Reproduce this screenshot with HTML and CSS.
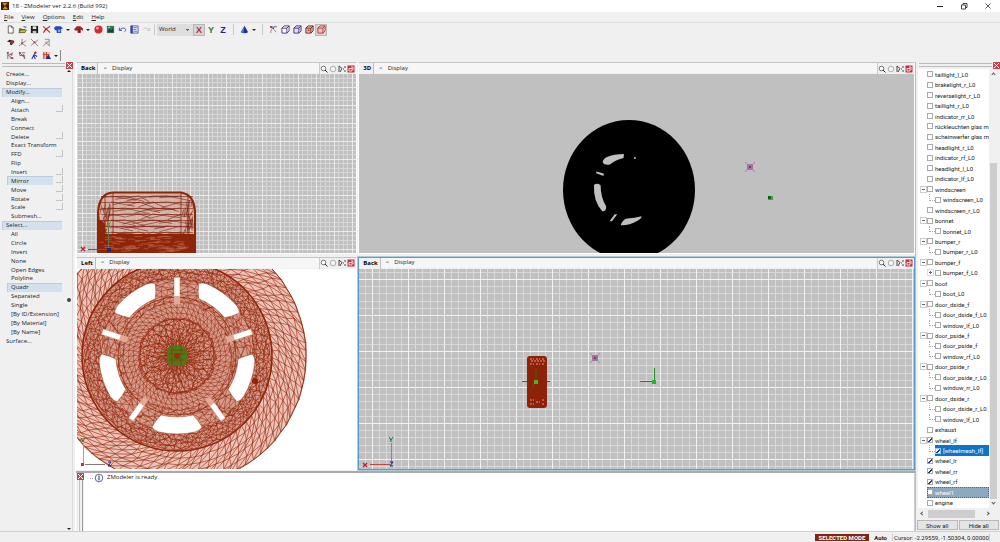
FILE: index.html
```
<!DOCTYPE html>
<html lang="en">
	<head>
		<meta charset="UTF-8" />
		<meta name="viewport" content="width=device-width, initial-scale=1.0" />
		<title>18 - ZModeler ver 2.2.6 (Build 992)</title>
		<link rel="stylesheet" href="styles.css">
		<script src="script.js" defer></script>
	</head>
	<body>
		<div class="titlebar">
			<svg class="logo" viewBox="0 0 10 10"><rect width="10" height="10" fill="#3a1a08"/><path d="M1 1h7L5 5l4 4H2l3-4z" fill="#e08a20"/><path d="M6 1h3v3z" fill="#8b2a10"/></svg>
			<span class="name">18 - ZModeler ver 2.2.6 (Build 992)</span>
			<button aria-label="Minimize"><svg viewBox="0 0 8 8"><path d="M1 4.5h6" stroke="#222" fill="none"/></svg></button>
			<button aria-label="Restore"><svg viewBox="0 0 8 8"><path d="M1.5 3h4v4h-4zM3 3V1.5h4v4H5.500" stroke="#333" stroke-width=".9" fill="none"/></svg></button>
			<button aria-label="Close"><svg viewBox="0 0 8 8"><path d="M1.500 1.500l5 5M6.500 1.500l-5 5" stroke="#333" stroke-width=".8" fill="none"/></svg></button>
		</div>
		<div class="menubar">
			<button><u>F</u>ile</button>
			<button><u>V</u>iew</button>
			<button><u>O</u>ptions</button>
			<button><u>E</u>dit</button>
			<button><u>H</u>elp</button>
		</div>
		<div class="toolbars">
			<div class="toolbar">
				<button class="tool" aria-label="New"><svg viewBox="0 0 10 10"><path d="M2.500 1h3.500l2 2v6h-5.500z" fill="#fff" stroke="#333" stroke-width=".8"/><path d="M6 1v2h2" fill="none" stroke="#333" stroke-width=".7"/></svg></button>
				<button class="tool" aria-label="Open"><svg viewBox="0 0 10 10"><path d="M1 8.500V3.500h3l.7 1H8v4z" fill="#7a7a20"/><path d="M1 8.500l2-3h6.500l-2 3z" fill="#c9c440" stroke="#333" stroke-width=".6"/><path d="M5.500 2.500c1-1.500 2-1 3 .2M8.700 1.400v1.500H7.200" fill="none" stroke="#222" stroke-width=".6"/></svg></button>
				<button class="tool" aria-label="Save"><svg viewBox="0 0 10 10"><path d="M1 1h8v8H1z" fill="#182018"/><path d="M3 1.500h4v3H3z" fill="#e8e8e8"/><path d="M3 6.500h4V9H3z" fill="#c8c8c8"/></svg></button>
				<button class="tool" aria-label="Delete"><svg viewBox="0 0 10 10"><path d="M1 1.500c3 2 5.500 4.500 8 7M9 1.500c-3 1.500-6 4-7.500 7" fill="none" stroke="#c8202a" stroke-width="1.200"/></svg></button>
				<button class="tool" aria-label="Import"><svg viewBox="0 0 10 10"><path d="M0 3l2-1.500h5.500L10 4 8.500 4.500 8 3.500V9H3V6L1 5.500z" fill="#2748b8"/><path d="M4.500 5h2.500v3H4.500z" fill="#8ea8ee"/></svg></button>
				<button class="drop" aria-label="Import options"></button>
				<button class="tool" aria-label="Export"><svg viewBox="0 0 10 10"><path d="M0 5l3-3.500h4L10 4v2.500L7.500 5v4H4V6L2 6.500z" fill="#a82420"/><path d="M5 5h2v3H5z" fill="#333"/></svg></button>
				<button class="drop" aria-label="Export options"></button>
				<button class="tool" aria-label="Materials"><svg viewBox="0 0 10 10"><circle cx="5" cy="5" r="4.500" fill="#d02c34"/><circle cx="3.800" cy="3.500" r="1.500" fill="#f3a0a0"/></svg></button>
				<button class="tool" aria-label="Textures"><svg viewBox="0 0 10 10"><path d="M1 1h8v8H1z" fill="#377a48"/><path d="M2 7l2-3 2 2 2-3v5H2z" fill="#1c3a5a"/><path d="M2.500 2h2v1.500h-2z" fill="#b8dca0"/></svg></button>
				<button class="tool" aria-label="Undo"><svg viewBox="0 0 10 10"><path d="M1.500 3v3h3M1.700 5.800c2-3 6-3 6.800-.8.300 1.500-.5 2-1.500 2.500" fill="none" stroke="#3a4a98"/></svg></button>
				<button class="tool" aria-label="History"><svg viewBox="0 0 10 10"><path d="M1 1h8v8H1z" fill="#e8ecff" stroke="#2c3c98" stroke-width=".8"/><path d="M1 1h2v8H1zM4 3h4M4 5h3M4 7h4" fill="#2c3c98" stroke="#4a58b0" stroke-width=".8"/></svg></button>
				<button class="tool" aria-label="Redo" disabled><svg viewBox="0 0 10 10"><path d="M8.500 3v3h-3M8.300 5.800c-2-3-6-3-6.800-.8" fill="none" stroke="#c4c4c4"/></svg></button>
				<span class="sep"></span>
				<select class="space" aria-label="Coordinate space"><option>World</option><option>Local</option></select>
				<button class="tool axis on x">X</button>
				<button class="tool axis y">Y</button>
				<button class="tool axis z">Z</button>
				<span class="sep wide"></span>
				<button class="tool" aria-label="Primitives"><svg viewBox="0 0 10 10"><path d="M5 .8L9 8q-4 2.200-8 0z" fill="#1c2c9c"/><path d="M5 .8L4 9q-2-.2-3-1z" fill="#4a78d8"/></svg></button>
				<button class="drop" aria-label="More primitives"></button>
				<span class="sep wide"></span>
				<button class="tool" aria-label="Vertices level"><svg viewBox="0 0 10 10"><path d="M2 9C2 5 3 3 8 1.500M2 2h7M3 2l5 6" fill="none" stroke="#56508c" stroke-width=".7"/><path d="M1.200 1.200h2v2h-2zM4 3h1.500v1.500H4z" fill="#b8303c"/></svg></button>
				<button class="tool" aria-label="Edges level"><svg viewBox="0 0 10 10"><path d="M1 3.500h5.500V9H1zL3.500 1H9v5.500L6.500 9M6.500 3.500L9 1" fill="#fff" stroke="#44306c"/></svg></button>
				<button class="tool" aria-label="Faces level"><svg viewBox="0 0 10 10"><path d="M1 3.500h5.500V9H1zL3.500 1H9v5.500L6.500 9M6.500 3.500L9 1" fill="#e4e0f4" stroke="#44306c"/></svg></button>
				<button class="tool" aria-label="Solids level"><svg viewBox="0 0 10 10"><path d="M1 3.500h5.500V9H1zL3.500 1H9v5.500L6.500 9M6.500 3.500L9 1" fill="#f0c8b8" stroke="#5a2020"/><path d="M3 5h2v2H3z" fill="#c03020"/></svg></button>
				<button class="tool on" aria-label="Objects level"><svg viewBox="0 0 10 10"><path d="M1 3.500h5.500V9H1zL3.500 1H9v5.500L6.500 9M6.500 3.500L9 1" fill="#f4c8c8" stroke="#b83038"/></svg></button>
			</div>
			<div class="toolbar">
				<button class="tool" aria-label="Magnet"><svg viewBox="0 0 10 10"><path d="M1 4l3-2 5 1v2L6 8 4 7l1-2z" fill="#3c2424"/><path d="M5 4l3-1v2L6 7z" fill="#b03828"/></svg></button>
				<button class="tool" aria-label="Snap to vertex"><svg viewBox="0 0 10 10"><path d="M4.500 1v5l-3.500 3M4.500 6l4.500 3M4.500 6L9 3" fill="none" stroke="#555" stroke-width=".7"/><path d="M3.500 5h2v2h-2z" fill="#d03048"/></svg></button>
				<button class="tool" aria-label="Snap to edge"><svg viewBox="0 0 10 10"><path d="M1 1l8 8M9 2L1 8.500" fill="none" stroke="#555" stroke-width=".7"/><path d="M4 4l2 1.500" stroke="#d03048" stroke-width="1.500"/></svg></button>
				<button class="tool" aria-label="Snap to face"><svg viewBox="0 0 10 10"><path d="M3 1.500h5v7M8 3L1 9M3.500 5L9 9" fill="none" stroke="#666" stroke-width=".7"/><path d="M4 4h2v2H4z" fill="#c89098"/></svg></button>
			</div>
			<div class="toolbar">
				<button class="tool" aria-label="Move pivot"><svg viewBox="0 0 10 10"><path d="M2 1v8M2 5l6-3M3 5l5 4M4 8h4" fill="none" stroke="#50486c" stroke-width=".8"/><path d="M1 1h2v2H1zM5 3h2v2H5zM6 7h2v2H6z" fill="#c03838"/></svg></button>
				<button class="tool" aria-label="Copy pivot"><svg viewBox="0 0 10 10"><path d="M2 2v3h5v4M4 2h4M2 2l6 6" fill="none" stroke="#50486c" stroke-width=".8"/><path d="M1 1h2v2H1zM5 4h2v2H5z" fill="#c03838"/></svg></button>
				<button class="tool" aria-label="Bones"><svg viewBox="0 0 10 10"><path d="M6 2L4 5l2 4M4 5L2 9M4 4l4 2" fill="none" stroke="#2834a0" stroke-width="1.200"/><circle cx="6" cy="1.800" r="1.300" fill="#b02c34"/></svg></button>
				<button class="tool" aria-label="UV mapper"><svg viewBox="0 0 10 10"><path d="M1 1h8v8H1z" fill="#f0c0a8"/><path d="M2 1v8M5 1v8M1 4h7" stroke="#b82c20" stroke-width=".9"/><path d="M4 9l3-5 3 5z" fill="#1c2c6c"/></svg></button>
				<button class="drop" aria-label="More tools"></button>
				<span class="sep dark"></span>
			</div>
		</div>
		<div class="main">
			<div class="commands">
				<div class="grip"><i></i><button class="close" aria-label="Close panel"></button></div>
				<ul class="list">
					<li><button>Create...</button></li>
					<li><button>Display...</button></li>
					<li><button class="active">Modify...</button></li>
					<li class="sub"><button>Align...</button></li>
					<li class="sub"><button>Attach</button><button class="opt" aria-label="Attach options"></button></li>
					<li class="sub"><button>Break</button></li>
					<li class="sub"><button>Connect</button></li>
					<li class="sub"><button>Delete</button><button class="opt" aria-label="Delete options"></button></li>
					<li class="sub"><button>Exact Transform</button></li>
					<li class="sub"><button>FFD</button><button class="opt" aria-label="FFD options"></button></li>
					<li class="sub"><button>Flip</button></li>
					<li class="sub"><button>Insert</button><button class="opt" aria-label="Insert options"></button></li>
					<li class="sub"><button class="active">Mirror</button><button class="opt" aria-label="Mirror options"></button></li>
					<li class="sub"><button>Move</button><button class="opt" aria-label="Move options"></button></li>
					<li class="sub"><button>Rotate</button><button class="opt" aria-label="Rotate options"></button></li>
					<li class="sub"><button>Scale</button><button class="opt" aria-label="Scale options"></button></li>
					<li class="sub"><button>Submesh...</button></li>
					<li><button class="active">Select...</button></li>
					<li class="sub"><button>All</button></li>
					<li class="sub"><button>Circle</button></li>
					<li class="sub"><button>Invert</button></li>
					<li class="sub"><button>None</button></li>
					<li class="sub"><button>Open Edges</button></li>
					<li class="sub"><button>Polyline</button></li>
					<li class="sub"><button class="active">Quadr</button></li>
					<li class="sub"><button>Separated</button></li>
					<li class="sub"><button>Single</button></li>
					<li class="sub"><button>[By ID/Extension]</button></li>
					<li class="sub"><button>[By Material]</button></li>
					<li class="sub"><button>[By Name]</button></li>
					<li><button>Surface...</button></li>
				</ul>
				<div class="rail"><i class="up"></i><i class="knob"></i><i class="down"></i></div>
			</div>
			<div class="center">
				<div class="views">
					<div class="view">
						<div class="head"><b>Back</b><button class="display"><span>&lt;</span>Display</button><span class="icons"></span></div>
						<svg class="canvas" id="back"></svg>
					</div>
					<div class="view">
						<div class="head"><b>3D</b><button class="display"><span>&lt;</span>Display</button><span class="icons"></span></div>
						<svg class="canvas">
							<ellipse cx="270" cy="116" rx="66" ry="70"/>
							<g transform="translate(181 36) scale(.333)" fill="#c0c0c0">
								<path d="M188 157Q190 134 252 132L251 144Q230 148 211 163Q194 168 188 157z"/>
								<path d="M169 185l22 6v7l-22-8z"/>
								<path d="M162 225Q172 218 182 226Q182 262 199 290Q198 306 187 304Q160 275 162 225z"/>
								<path d="M224 313h8l-16 21h-7z"/>
								<path d="M243 343Q250 328 262 326Q285 325 305 319Q305 327 290 334Q268 347 243 346z"/>
								<circle cx="285" cy="144" r="3"/>
							</g>
							<use href="#light" x="391" y="93"/>
							<path d="M409 122h5v4h-5z" fill="#2eb03a"/><path d="M409 122h3v3h-3z" fill="#106018"/>
						</svg>
					</div>
					<div class="view">
						<div class="head"><b>Left</b><button class="display"><span>&lt;</span>Display</button><span class="icons"></span></div>
						<svg class="canvas white" id="left"></svg>
					</div>
					<div class="view current">
						<div class="head"><b>Back</b><button class="display"><span>&lt;</span>Display</button><span class="icons"></span></div>
						<svg class="canvas">
							<defs>
								<pattern id="grid" width="36" height="36" patternUnits="userSpaceOnUse" x="13" y="10">
									<path d="M7.500 0v36M14.500 0v36M22.500 0v36M29.500 0v36M0 7.500h36M0 14.500h36M0 22.500h36M0 29.500h36" stroke="#d8d8d8" fill="none"/>
									<path d="M.5 0v36M0 .5h36" stroke="#f2f2f2" fill="none"/>
								</pattern>
								<g id="light"><path d="M-5-5L5 5M5-5L-5 5" stroke="#b07ca4"/><path d="M-3-3h6v6h-6z" fill="#a8709c"/><path d="M-1-1h2v2h-2z" fill="#7a3c70"/></g>
							</defs>
							<rect width="100%" height="100%" fill="url(#grid)"/>
							<path d="M163 112.500h28" stroke="#a03020"/>
							<rect x="168" y="87" width="20" height="52" rx="3" fill="#8e2208"/>
							<path d="M171 90h4M171 95h4M177 90h4M177 95h4M183 90h3M183 95h3M171 131h4M171 135h4M177 133h4M183 131h3M183 135h3M172 92h14" stroke="#dca08c" stroke-dasharray="2 1"/>
							<path d="M177 113V99M175 114l-1 4" stroke="#3c6010"/><path d="M175 111h4v4h-4z" fill="#40b828"/>
							<use href="#light" x="236" y="89"/>
							<path d="M281 112.500h14" stroke="#b83038"/><path d="M295.500 113V99" stroke="#188828"/><path d="M293 111h4v4h-4z" fill="#20b828"/>
							<path d="M11 195.500h20" stroke="#c04840"/><path d="M32.500 174v21" stroke="#60a860"/>
							<path d="M30 168l2 3 2-3M32 171v2" stroke="#107828" fill="none"/><path d="M4 194l4 4M8 194l-4 4" stroke="#d01830" stroke-width="1.300"/><path d="M31 193h3l-3 4h3" stroke="#20207a" fill="none"/>
						</svg>
					</div>
				</div>
				<div class="console">
					<div class="side"><button class="close" aria-label="Close log"></button></div>
					<div class="log"><svg viewBox="0 0 14 10"><path d="M0 5.500h4" stroke="#999" stroke-dasharray="1 1"/><circle cx="9" cy="5" r="3.800" fill="#fff" stroke="#34407c" stroke-width=".8"/><path d="M9 2.500v5" stroke="#1c2c7c"/></svg><span>ZModeler is ready.</span></div>
				</div>
			</div>
			<div class="objects">
				<div class="grip"><i></i><button class="close" aria-label="Close panel"></button></div>
				<div class="scroller">
					<ul class="tree">
						<li><label><input type="checkbox">taillight_l_L0</label></li>
						<li><label><input type="checkbox">brakelight_r_L0</label></li>
						<li><label><input type="checkbox">reverselight_r_L0</label></li>
						<li><label><input type="checkbox">taillight_r_L0</label></li>
						<li><label><input type="checkbox">indicator_rr_L0</label></li>
						<li><label><input type="checkbox">rückleuchten glas m</label></li>
						<li><label><input type="checkbox">scheinwerfer glas m</label></li>
						<li><label><input type="checkbox">headlight_r_L0</label></li>
						<li><label><input type="checkbox">indicator_rf_L0</label></li>
						<li><label><input type="checkbox">headlight_l_L0</label></li>
						<li><label><input type="checkbox">indicator_lf_L0</label></li>
						<li class="open"><label><input type="checkbox">windscreen</label></li>
						<li class="child last"><label><input type="checkbox">windscreen_L0</label></li>
						<li><label><input type="checkbox">windscreen_r_L0</label></li>
						<li class="open"><label><input type="checkbox">bonnet</label></li>
						<li class="child last"><label><input type="checkbox">bonnet_L0</label></li>
						<li class="open"><label><input type="checkbox">bumper_r</label></li>
						<li class="child last"><label><input type="checkbox">bumper_r_L0</label></li>
						<li class="open"><label><input type="checkbox">bumper_f</label></li>
						<li class="child closed"><label><input type="checkbox">bumper_f_L0</label></li>
						<li class="open"><label><input type="checkbox">boot</label></li>
						<li class="child last"><label><input type="checkbox">boot_L0</label></li>
						<li class="open"><label><input type="checkbox">door_dside_f</label></li>
						<li class="child"><label><input type="checkbox">door_dside_f_L0</label></li>
						<li class="child last"><label><input type="checkbox">window_lf_L0</label></li>
						<li class="open"><label><input type="checkbox">door_pside_f</label></li>
						<li class="child"><label><input type="checkbox">door_pside_f</label></li>
						<li class="child last"><label><input type="checkbox">window_rf_L0</label></li>
						<li class="open"><label><input type="checkbox">door_pside_r</label></li>
						<li class="child"><label><input type="checkbox">door_pside_r_L0</label></li>
						<li class="child last"><label><input type="checkbox">window_rr_L0</label></li>
						<li class="open"><label><input type="checkbox">door_dside_r</label></li>
						<li class="child"><label><input type="checkbox">door_dside_r_L0</label></li>
						<li class="child last"><label><input type="checkbox">window_lf_L0</label></li>
						<li><label><input type="checkbox">exhaust</label></li>
						<li class="open"><label><input type="checkbox" checked>wheel_lf</label></li>
						<li class="child last selected"><label><input type="checkbox" checked>[wheelmesh_lf]</label></li>
						<li><label><input type="checkbox" checked>wheel_lr</label></li>
						<li><label><input type="checkbox" checked>wheel_rr</label></li>
						<li><label><input type="checkbox" checked>wheel_rf</label></li>
						<li class="target"><label><input type="checkbox">wheel1</label></li>
						<li><label><input type="checkbox">engine</label></li>
					</ul>
					<div class="vbar"><i class="arrow up"></i><i class="thumb"></i><i class="arrow down"></i></div>
				</div>
				<div class="hbar"><i class="arrow prev"></i><i class="thumb"></i><i class="arrow next"></i></div>
				<div class="actions"><button>Show all</button><button>Hide all</button></div>
			</div>
		</div>
		<div class="status">
			<b class="mode">SELECTED MODE</b>
			<b>Auto</b>
			<span class="cursor">Cursor: -2.29559, -1.50304, 0.00000</span>
		</div>
	</body>
</html>
```
FILE: styles.css
```
* {
	box-sizing: border-box;
}
body {
	margin: 0;
	height: 100vh;
	display: flex;
	flex-direction: column;
	overflow: hidden;
	background: #f0f0f0;
	color: #222;
	font: 6px/9px "Open Sans", "Noto Sans", sans-serif;
}
button,
select {
	margin: 0;
	padding: 0;
	border: 0;
	background: none;
	color: inherit;
	font: inherit;
}
ul {
	margin: 0;
	padding: 0;
	list-style: none;
}
svg {
	display: block;
}

.titlebar {
	display: flex;
	align-items: center;
	height: 12px;
	flex: none;
	background: #fff;
}
.titlebar .logo {
	width: 8px;
	height: 8px;
	margin: 0 3px 0 1px;
}
.titlebar .name {
	flex: 1;
}
.titlebar button {
	width: 24px;
	display: flex;
	justify-content: center;
}
.titlebar button svg {
	width: 8px;
	height: 8px;
}
.menubar {
	display: flex;
	gap: 8px;
	flex: none;
	height: 11px;
	padding-left: 4px;
	border-bottom: 1px solid #dcdcdc;
}
.toolbars {
	flex: none;
}
.toolbar {
	display: flex;
	align-items: center;
	height: 13px;
	padding-left: 4px;
}
.tool {
	display: flex;
	align-items: center;
	justify-content: center;
	width: 12px;
	height: 12px;
}
.tool svg {
	width: 9px;
	height: 9px;
}
.tool.on {
	background: #d4d4d4;
	border: 1px solid #b8b8b8;
}
.axis {
	font: bold 9px/12px "Liberation Sans", Arial, sans-serif;
}
.axis.x {
	color: #b8283c;
}
.axis.y {
	color: #1c7830;
}
.axis.z {
	color: #1c2878;
}
.drop {
	width: 8px;
	height: 12px;
	display: flex;
	align-items: center;
	justify-content: center;
}
.drop::after {
	content: "";
	border: 2px solid transparent;
	border-top-color: #222;
	border-bottom: 0;
}
.sep {
	width: 1px;
	height: 11px;
	margin: 0 2px;
	background: #c8c8c8;
}
.sep.wide {
	margin: 0 4px;
}
.sep.dark {
	margin: 0;
	background: #888;
}
.space {
	width: 36px;
	height: 12px;
	padding-left: 2px;
	appearance: none;
	border-radius: 0;
	font-size: 6px;
	background: linear-gradient(45deg, transparent 50%, #666 50%) 29px 5px / 2px 2px no-repeat,
		linear-gradient(-45deg, transparent 50%, #666 50%) 31px 5px / 2px 2px no-repeat, #dedede;
}

.main {
	flex: 1;
	min-height: 0;
	display: flex;
}
.grip {
	grid-column: 1 / -1;
	display: flex;
	justify-content: space-between;
	height: 7px;
	flex: none;
}
.grip i {
	flex: 1;
	height: 4px;
	margin: 1px 1px 0 2px;
	border: 1px solid #bbb;
	border-width: 1px 0;
}
.close {
	width: 7px;
	height: 7px;
	flex: none;
	background: linear-gradient(45deg, transparent 42%, #fff 42%, #fff 58%, transparent 58%),
		linear-gradient(-45deg, transparent 42%, #fff 42%, #fff 58%, transparent 58%), #c8434c;
	border: 1px solid #c8434c;
}

/* command list */
.commands {
	width: 76px;
	flex: none;
	display: grid;
	grid-template-columns: 1fr 7px;
	grid-template-rows: 7px 1fr;
	padding-right: 2px;
	border-right: 1px solid #fff;
}
.list {
	display: grid;
	grid-auto-rows: 1fr;
	height: 275px;
	margin: 1px 1px 0 2px;
	line-height: 8px;
}
.list li {
	display: flex;
	gap: 3px;
	padding-right: 3px;
}
.list .sub {
	padding-left: 5px;
}
.list button {
	flex: 1;
	padding-left: 4px;
	text-align: left;
	white-space: nowrap;
}
.list .active {
	background: #d3e1ef;
	box-shadow: inset 1px 1px #bccbda;
}
.list .opt {
	flex: 0 0 7px;
	height: 7px;
	padding: 0;
	margin-right: -1px;
	border: 1px solid #c4c4c4;
	border-width: 0 1px 1px 0;
}
.rail {
	display: flex;
	flex-direction: column;
	align-items: center;
	justify-content: space-between;
	border-right: 1px solid #dcdcdc;
	padding: 1px 0;
}
.rail i {
	border: 2px solid transparent;
}
.rail .up {
	border-bottom-color: #222;
	border-top: 0;
}
.rail .knob {
	border-color: #444;
	border-radius: 2px;
}
.rail .down {
	border-top-color: #222;
	border-bottom: 0;
}

/* viewports */
.center {
	flex: 1;
	min-width: 0;
	display: flex;
	flex-direction: column;
}
.views {
	flex: 1;
	min-height: 0;
	display: grid;
	grid-template-columns: 281fr 556fr;
	grid-template-rows: 192fr 214fr;
	gap: 3px 1px;
}
.view {
	display: flex;
	flex-direction: column;
	min-width: 0;
	min-height: 0;
	border: 1px solid #fff;
	border-top-color: #c4c4c4;
}
.view.current {
	border-color: #5a9cc8;
	box-shadow: 0 0 0 1px #a8cce0;
}
.head {
	flex: none;
	display: flex;
	height: 11px;
}
.head b {
	padding: 1px 2px 0 4px;
	border-right: 1px solid #c0c0c0;
	color: #000;
}
.head .display {
	flex: 1;
	margin: 0 0 1px;
	padding-left: 5px;
	text-align: left;
	background: #f6f6f6;
}
.head .display span {
	margin-right: 5px;
}
.icons {
	display: flex;
	align-items: center;
	border-left: 1px solid #ccc;
}
.icons button {
	width: 9px;
}
.icons svg {
	width: 8px;
	height: 8px;
}
.canvas {
	flex: 1;
	width: 100%;
	min-height: 0;
	background: #c0c0c0;
}
.canvas.white {
	background: #fff;
}

.console {
	flex: none;
	display: flex;
	height: 60px;
	padding-left: 1px;
	margin-top: 1px;
	border-top: 2px solid #aaa;
}
.console .side {
	width: 7px;
	background: linear-gradient(90deg, transparent 2px, #c4c4c4 2px, #c4c4c4 3px, transparent 3px, transparent 5px, #999 5px, #999 6px, transparent 6px);
}
.console .side button {
	display: block;
}
.log {
	flex: 1;
	display: flex;
	align-items: flex-start;
	padding-left: 6px;
	background: #fff;
	border-right: 1px solid #ccc;
}
.log svg {
	width: 14px;
	height: 10px;
	margin-right: 3px;
}

/* object tree */
.objects {
	width: 85px;
	flex: none;
	display: flex;
	flex-direction: column;
	padding-left: 1px;
	border-left: 1px solid #bbb;
	font-family: Roboto, sans-serif;
}
.scroller {
	flex: 1;
	min-height: 0;
	display: flex;
	margin: 0 2px 0 1px;
	background: #fff;
}
.tree {
	flex: 1;
	min-width: 0;
	display: grid;
	grid-auto-rows: 1fr;
	overflow: hidden;
}
.tree li {
	display: flex;
	align-items: center;
	padding-left: 9px;
	position: relative;
	white-space: nowrap;
}
.tree .child {
	padding-left: 17px;
}
.tree label {
	flex: 1;
	display: flex;
	align-items: center;
	gap: 2px;
}
.tree input {
	appearance: none;
	width: 6px;
	height: 6px;
	margin: 0;
	flex: none;
	border: 1px solid #aaa;
	background: #fff;
}
.tree input:checked {
	background: linear-gradient(-45deg, transparent 35%, #1c3c98 35%, #1c3c98 60%, transparent 60%) #fff;
}
.tree .open::before,
.tree .closed::before {
	content: "";
	position: absolute;
	left: 2px;
	width: 5px;
	height: 5px;
	border: 1px solid #ccc;
	background: linear-gradient(#666, #666) center / 3px 1px no-repeat;
}
.tree .closed::before {
	left: 9px;
	border-color: #ddd;
	background: linear-gradient(#666, #666) center / 3px 1px no-repeat, linear-gradient(#666, #666) center / 1px 3px no-repeat;
}
.tree .child:not(.closed)::before {
	content: "";
	position: absolute;
	left: 11px;
	top: 0;
	width: 5px;
	height: 50%;
	border: 1px dotted #aaa;
	border-width: 0 0 1px 1px;
}
.tree .selected label {
	align-self: stretch;
	background: #0f74c6;
	color: #fff;
}
.tree .selected input {
	border-color: #9cc8ec;
}
.tree .target label {
	align-self: stretch;
	background: #8ca9c0;
	color: #fff;
	outline: 1px dotted #567;
	outline-offset: -1px;
}
.vbar {
	width: 9px;
	display: flex;
	flex-direction: column;
	align-items: center;
	background: #f0f0f0;
	padding: 4px 0;
}
.vbar .thumb {
	width: 7px;
	flex: 0 0 78%;
	margin: auto 0 2px;
	background: #cdcdcd;
}
.hbar {
	display: flex;
	align-items: center;
	height: 11px;
	padding: 0 11px 0 4px;
}
.hbar .thumb {
	width: 47px;
	height: 8px;
	margin: 0 auto 0 4px;
	background: #cdcdcd;
}
.arrow {
	width: 3px;
	height: 3px;
	flex: none;
	border: 1px solid #555;
	border-width: 1px 0 0 1px;
}
.arrow.up {
	transform: rotate(45deg);
}
.arrow.down {
	transform: rotate(225deg);
}
.arrow.prev {
	transform: rotate(-45deg);
}
.arrow.next {
	transform: rotate(135deg);
}
.actions {
	display: flex;
	gap: 1px;
	padding: 1px 1px 1px 0;
}
.actions button {
	flex: 1;
	height: 10px;
	background: #e4e4e4;
	border: 1px solid #b8b8b8;
}

.status {
	flex: none;
	display: flex;
	align-items: center;
	justify-content: flex-end;
	gap: 5px;
	height: 11px;
	padding-right: 10px;
	border-top: 1px solid #cfcfcf;
	line-height: 7px;
	font-family: Roboto, sans-serif;
}
.status .mode {
	padding: 0 4px;
	background: #84240c;
	color: #fff;
}
.status .cursor {
	width: 98px;
	padding-left: 1px;
	border: 1px solid #ccc;
	border-width: 0 1px 0 1px;
	white-space: nowrap;
}
```
FILE: script.js
```
// viewport buttons
document.querySelectorAll(".icons").forEach(function (el) {
	el.innerHTML = `
		<button aria-label="Zoom"><svg viewBox="0 0 8 8"><circle cx="3.500" cy="3.500" r="2.300" fill="#fff" stroke="#555" stroke-width=".8"/><path d="M5 5l2.500 2.500" stroke="#222"/></svg></button>
		<button aria-label="Orbit"><svg viewBox="0 0 8 8"><circle cx="4" cy="4" r="2.800" fill="#f4f4f4" stroke="#999" stroke-width=".8"/></svg></button>
		<button aria-label="Fit"><svg viewBox="0 0 8 8"><path d="M1 1v6M1 1l3 2.500L2 7M7 1v2M7 5v2M5 4h1" fill="none" stroke="#333" stroke-width=".9"/></svg></button>
		<button aria-label="Maximize"><svg viewBox="0 0 8 8"><path d="M.5.5h7v7h-7z" fill="#c8303a"/><path d="M2 3.500h3V6H2zM4 2h2v3" fill="none" stroke="#fff" stroke-width=".8"/></svg></button>`;
});

var seed = 7;
function rnd() {
	seed = (seed * 16807) % 2147483647;
	return seed / 2147483647;
}
function at(cx, cy, r, a) {
	return (cx + r * Math.cos(a)).toFixed(1) + " " + (cy + r * Math.sin(a)).toFixed(1);
}

// triangulated ring between radius r0 and r1
function ring(r0, r1, rows, segs, twist, jitter) {
	var d = "", pts = [];
	for (var i = 0; i <= rows; i++) {
		var line = [];
		for (var j = 0; j < segs; j++) {
			var r = r0 + ((r1 - r0) * i) / rows + (rnd() - 0.5) * jitter;
			line.push(at(100, 87, r, ((j + i * twist + (rnd() - 0.5) * jitter * 0.3) / segs) * Math.PI * 2));
		}
		pts.push(line);
		d += "M" + line.join("L") + "z";
	}
	for (i = 0; i < rows; i++) {
		for (j = 0; j < segs; j++) {
			d += "M" + pts[i][j] + "L" + pts[i + 1][j] + "L" + pts[i][(j + 1) % segs];
		}
	}
	return d;
}

function wheel() {
	var line = ' fill="none" stroke="#8e2408" stroke-width=';
	var holes = "";
	for (var k = 0; k < 5; k++) {
		var deg = k * 72;
		holes += `<g transform="rotate(${deg} 100 87)">
			<path d="M75 158Q79 151 84 146Q100 150 116 146Q121 151 125 158Q124 161 118 163Q100 167 82 163Q76 161 75 158z" fill="#fff" stroke="#a04830" stroke-width=".5"/>
			<path d="M97 8h6v27h-6z" fill="#e2a898"/><path d="M97.500 9h5v18h-5z" fill="#fff"/>
		</g>`;
	}
	document.getElementById("left").innerHTML = `
		<circle cx="100" cy="87" r="129" fill="#efc3b8"/>
		<path d="${ring(95, 129, 5, 84, 1.5, 1.5)}"${line}".6"/>
		<circle cx="100" cy="87" r="129"${line}".8"/>
		<circle cx="100" cy="87" r="95" fill="#d89c8c"/>
		<path d="${ring(77, 94, 6, 120, 0.5, 3)}"${line}".6"/>
		<path d="${ring(54, 77, 6, 64, 0.5, 4)}"${line}".5"/>
		<path d="${ring(38, 54, 3, 56, 0, 1)}"${line}".5"/>
		<path d="${ring(6, 38, 9, 56, 0.5, 4)}"${line}".6"/>
		<circle cx="100" cy="87" r="95"${line}"1.500"/>
		<circle cx="100" cy="87" r="59"${line}".8"/>
		<circle cx="100" cy="87" r="37"${line}".8"/>
		${holes}
		<circle cx="178" cy="112" r="3" fill="#8e2408"/>
		<rect x="90" y="77" width="20" height="20" rx="6" fill="#4c7a14"/>
		<path d="M92 81h16M92 85h16M92 91h16M95 78v18M104 78v18" stroke="#7c4010" stroke-width=".7"/>
		<circle cx="100" cy="87" r="3" fill="#9c3008"/>
		<path d="M6.500 174v21" stroke="#90b090"/><path d="M8 195.500h20" stroke="#887878"/>
		<path d="M4 169l2 3 2-3M6 171v2" fill="none" stroke="#288020"/>
		<path d="M4 194h3v3H4z" fill="#c03030"/><path d="M31 193h3l-3 4h3" fill="none" stroke="#20207a"/>`;
}

// tyre from behind, top left viewport
function tyre() {
	var d = "", x, y, i;
	for (y = 122; y < 162; y += 6) {
		d += "M24 " + y + ".5H116";
		for (x = 34; x < 104; x += 14) {
			d += "M" + x + " " + y + "l" + (10 + rnd() * 18).toFixed(1) + " " + (rnd() * 6).toFixed(1);
			d += "M" + (x + 14) + " " + y + "l-" + (10 + rnd() * 18).toFixed(1) + " " + (rnd() * 6).toFixed(1);
		}
	}
	for (i = 0; i < 60; i++) {
		x = 23 + rnd() * 10 + (i % 2) * 83;
		y = 126 + rnd() * 30;
		d += "M" + x.toFixed(1) + " " + y.toFixed(1) + "l" + (rnd() * 6 - 3).toFixed(1) + " " + (4 + rnd() * 6).toFixed(1);
	}
	var low = "";
	for (i = 0; i < 70; i++) {
		low += "M" + (22 + rnd() * 86).toFixed(1) + " " + (162 + rnd() * 16).toFixed(1) + "l" + (4 + rnd() * 8).toFixed(1) + " " + (rnd() * 2 - 1).toFixed(1);
	}
	document.getElementById("back").innerHTML = `
		<defs><pattern id="fine" width="18" height="18" x="5" y="13" patternUnits="userSpaceOnUse">
			<path d="M4.500 0v18M9.500 0v18M13.500 0v18M0 4.500h18M0 9.500h18M0 13.500h18" stroke="#d6d6d6" fill="none"/><path d="M.5 0v18M0 .5h18" stroke="#eaeaea" fill="none"/>
		</pattern></defs>
		<rect width="100%" height="100%" fill="url(#fine)"/>
		<path d="M20 200V139Q21 119 36 118H104Q119 121 119 139V200z" fill="#d8a898" fill-opacity=".7"/>
		<path d="M21 200V139Q22 119 36 118.500H104Q118 121 118 139V200" fill="none" stroke="#8e2408" stroke-width="2"/>
		<path d="M24 200V160L22 142M36 119V160M104 119V160M28 122V160M111 122V160" fill="none" stroke="#8e2408" stroke-width=".8"/>
		<path d="${d}" fill="none" stroke="#7a2410" stroke-width=".6"/>
		<path d="M20 146l4 0l4 4V160H119V200H20z" fill="#8e2408"/>
		<path d="${low}" fill="none" stroke="#c87860" stroke-width=".5"/>
		<path d="M11 175.500h20" stroke="#705060"/><path d="M31.500 152v22" stroke="#607848"/>
		<path d="M30 148l2 2 2-2M32 150v3" fill="none" stroke="#48a030"/>
		<path d="M4 173l4 4M8 173l-4 4" stroke="#d01830" stroke-width="1.300"/><path d="M30 174h4v4h-4z" fill="#2c208a"/>`;
}

wheel();
tyre();
```
